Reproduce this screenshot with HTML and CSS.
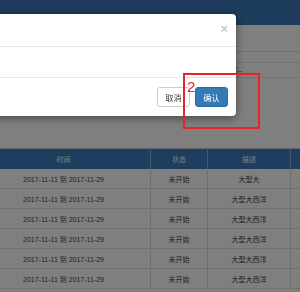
FILE: index.html
```html
<!DOCTYPE html>
<html lang="zh">
<head>
<meta charset="utf-8">
<title>活动列表</title>
<link rel="stylesheet" href="styles.css">
</head>
<body>
	<!-- page -->
	<div class="page">
		<div class="navbar"></div>

		<div class="filters">
			<div class="frow tall"></div>
			<div class="frow short"></div>
			<div class="frow mid"><span class="select">--请选择--</span></div>
		</div>

		<table class="grid">
			<thead>
				<tr>
					<th class="c-time">时间</th>
					<th class="c-state">状态</th>
					<th class="c-desc">描述</th>
					<th></th>
				</tr>
			</thead>
			<tbody>
				<tr><td>2017-11-11 到 2017-11-29</td><td>未开始</td><td>大型大</td><td></td></tr>
				<tr><td>2017-11-11 到 2017-11-29</td><td>未开始</td><td>大型大西洋</td><td></td></tr>
				<tr><td>2017-11-11 到 2017-11-29</td><td>未开始</td><td>大型大西洋</td><td></td></tr>
				<tr><td>2017-11-11 到 2017-11-29</td><td>未开始</td><td>大型大西洋</td><td></td></tr>
				<tr><td>2017-11-11 到 2017-11-29</td><td>未开始</td><td>大型大西洋</td><td></td></tr>
				<tr><td>2017-11-11 到 2017-11-29</td><td>未开始</td><td>大型大西洋</td><td></td></tr>
			</tbody>
		</table>
	</div>

	<div class="backdrop"></div>

	<!-- dialog -->
	<div class="modal">
		<div class="modal-header">
			<span class="close">&times;</span>
		</div>
		<div class="modal-body"></div>
		<div class="modal-footer">
			<button class="btn btn-default">取消</button>
			<button class="btn btn-primary">确认</button>
		</div>
	</div>

	<!-- annotation -->
	<div class="mark"></div>
	<span class="mark-num">2</span>
</body>
</html>
```

FILE: styles.css
```css
body {
	margin: 0;
	width: 300px;
	height: 292px;
	overflow: hidden;
	background: #fff;
	font-family: "Liberation Sans", "Noto Sans CJK SC", sans-serif;
}

.page {
	width: 300px;
}

.navbar {
	height: 25px;
	background: #3c79b6;
}

.frow {
	border-bottom: 1px solid #e2e2e2;
}

.frow.tall {
	height: 26px;
}

.frow.short {
	height: 10px;
}

.frow.mid {
	height: 14px;
	display: flex;
	align-items: center;
}

.select {
	margin-left: 212px;
	font-size: 7px;
	color: #555;
}

table.grid {
	margin: 70px 0 0 -23px;
	border-collapse: collapse;
	border-top: 1px solid #c8c8c8;
	width: 340px;
	font-size: 7px;
	color: #444;
	table-layout: fixed;
}

.c-time {
	width: 173px;
}

.c-state {
	width: 56px;
}

.c-desc {
	width: 82px;
}

thead th {
	height: 20px;
	padding: 0;
	background: #3a7cbd;
	color: #fff;
	font-weight: normal;
	border-right: 1px solid #8fb0d2;
}

tbody td {
	height: 19px;
	padding: 0;
	text-align: center;
	border-bottom: 1px solid #dedede;
	border-right: 1px solid #dedede;
}

.backdrop {
	position: fixed;
	top: 0;
	left: 0;
	right: 0;
	bottom: 0;
	background: rgba(0, 0, 0, .5);
}

.modal {
	position: absolute;
	top: 14px;
	left: -70px;
	width: 306px;
	background: #fff;
	border-radius: 4px;
	box-shadow: 0 2px 8px rgba(0, 0, 0, .45);
}

.modal-header {
	height: 32px;
	border-bottom: 1px solid #eaeaea;
	display: flex;
	justify-content: flex-end;
	padding-right: 8px;
}

.close {
	margin-top: 8px;
	font-size: 13px;
	line-height: 13px;
	font-weight: bold;
	color: #c9c9c9;
}

.modal-body {
	height: 30px;
	border-bottom: 1px solid #e8e8e8;
}

.modal-footer {
	display: flex;
	justify-content: flex-end;
	gap: 5px;
	padding: 9px 8px 9px 0;
}

.btn {
	width: 33px;
	height: 20px;
	padding: 0;
	font-family: inherit;
	font-size: 8px;
	border-radius: 3px;
	border: 1px solid #ccc;
}

.btn-default {
	background: #fff;
	color: #333;
}

.btn-primary {
	background: #337ab7;
	border-color: #2e6da4;
	color: #fff;
}

.mark {
	position: absolute;
	left: 183px;
	top: 73px;
	width: 73px;
	height: 52px;
	border: 2px solid #e8232a;
}

.mark-num {
	position: absolute;
	left: 187px;
	top: 79px;
	font-size: 15px;
	line-height: 15px;
	color: #e8232a;
}
```
